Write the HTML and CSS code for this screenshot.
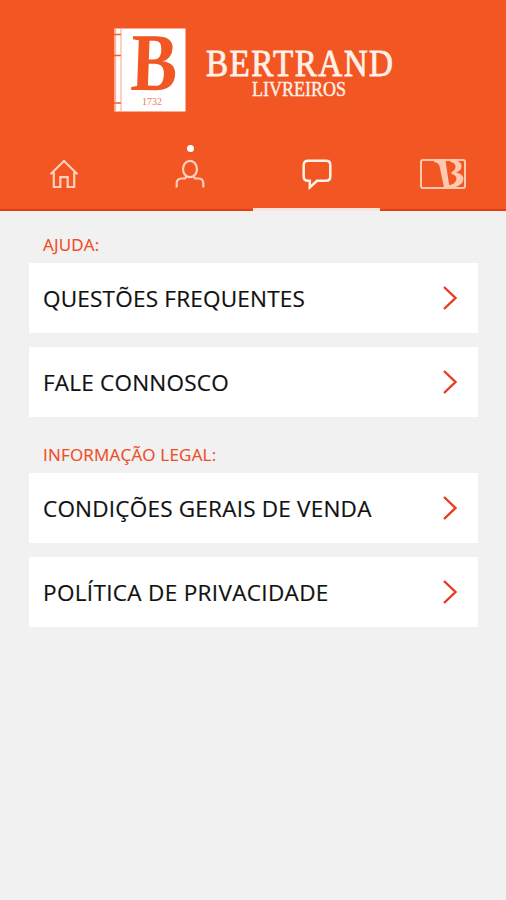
FILE: index.html
```html
<!DOCTYPE html>
<html lang="pt">
<head>
<meta charset="utf-8">
<title>Bertrand Livreiros</title>
<link rel="stylesheet" href="styles.css">
</head>
<body>
<header class="header">
  <div class="brand">
    <svg class="brand-mark" viewBox="0 0 72 84">
      <rect x="0.5" y="0.5" width="71" height="83" fill="#fff"/>
      <path d="M0 6.500H7M0 27.500H7M0 75H7" fill="none" stroke="#f15623" stroke-width="1.500"/>
      <path d="M7 1V83M1.700 1V83" fill="none" stroke="#f58a68" stroke-width=".8"/>
      <text class="mark-letter" transform="translate(16 62) skewX(-2) scale(.85 1)">B</text>
      <text class="mark-year" x="28" y="77" textLength="20" lengthAdjust="spacingAndGlyphs">1732</text>
    </svg>
    <svg class="brand-name" viewBox="0 0 190 56">
      <text class="name-main" transform="translate(1 31) scale(.85 1)" textLength="220">BERTRAND</text>
      <text class="name-sub" x="47" y="51" textLength="94" lengthAdjust="spacingAndGlyphs">LIVREIROS</text>
    </svg>
  </div>
  <nav class="tabs">
    <a class="tab">
      <svg class="icon" width="30" height="32" viewBox="0 0 30 32"><path d="M1.500 16.200L15 3L28.500 16.200M4.800 14V29H11.300V19.200H18.700V29H25.200V14"/></svg>
    </a>
    <a class="tab">
      <svg class="icon" width="30" height="32" viewBox="0 0 30 32"><ellipse cx="15" cy="11" rx="7" ry="8.200"/><path d="M1.700 29.500V25.500Q1.700 20.500 6.500 20.500H10L11.500 18M28.300 29.500V25.500Q28.300 20.500 23.500 20.500H20L18.500 18"/></svg>
      <span class="dot"></span>
    </a>
    <a class="tab active">
      <svg class="icon" width="30" height="32" viewBox="0 0 30 32"><path d="M6 2.800H24Q28.300 2.800 28.300 7V18.500Q28.300 22.800 24 22.800H15L7.800 29.500V22.800H6Q1.700 22.800 1.700 18.500V7Q1.700 2.800 6 2.800Z"/></svg>
    </a>
    <a class="tab">
      <svg class="card-icon" width="46" height="30" viewBox="0 0 46 30">
        <rect x="1" y="1" width="44" height="28" rx="2"/>
        <path d="M14 1.500H25.500L29.500 28.500H24L19.500 7Q18.500 3.500 14 3Z"/>
        <path d="M29 1.500H36Q41.500 3 41.500 7.500Q41 12 36 13.500Q43.500 15 43.500 20Q43 25.500 35 28.500H27L28 26.500Q36 25 36.500 20Q36.500 16 31.500 15V13Q35.500 11 35.500 7.500Q35.500 4 31 3Z"/>
      </svg>
    </a>
  </nav>
</header>
<main class="content">
  <section class="group">
    <h2 class="label"><span>AJUDA:</span></h2>
    <a class="row"><span>QUESTÕES FREQUENTES</span><svg class="chevron" viewBox="0 0 16 26"><path d="M2 2L13.500 13L2 24"/></svg></a>
    <a class="row"><span>FALE CONNOSCO</span><svg class="chevron" viewBox="0 0 16 26"><path d="M2 2L13.500 13L2 24"/></svg></a>
  </section>
  <section class="group">
    <h2 class="label"><span>INFORMAÇÃO LEGAL:</span></h2>
    <a class="row"><span>CONDIÇÕES GERAIS DE VENDA</span><svg class="chevron" viewBox="0 0 16 26"><path d="M2 2L13.500 13L2 24"/></svg></a>
    <a class="row"><span class="privacy">POLÍTICA DE PRIVACIDADE</span><svg class="chevron" viewBox="0 0 16 26"><path d="M2 2L13.500 13L2 24"/></svg></a>
  </section>
</main>
</body>
</html>
```
FILE: styles.css
```css
* { box-sizing: border-box; }
body {
  margin: 0;
  min-height: 900px;
  background: #f1f1f1;
  font-family: "Open Sans", sans-serif;
}
svg { overflow: visible; }
.header {
  height: 211px;
  background: #f15623;
  border-bottom: 2px solid #e23e13;
}
.brand {
  height: 138px;
  padding: 28px 0 0 114px;
  display: flex;
  gap: 19px;
}
.brand-mark { width: 72px; height: 84px; }
.brand-name { width: 190px; height: 56px; margin-top: 17px; }
.mark-letter {
  font: bold 82px "Liberation Serif", serif;
  fill: #f15623;
}
.mark-year { font: 11px "Liberation Serif", serif; fill: #f47c57; }
.name-main { font: 39px "Liberation Serif", serif; fill: #fff0e8; stroke: #fff0e8; stroke-width: .9; }
.name-sub { font: 20px "Liberation Serif", serif; fill: #fff0e8; stroke: #fff0e8; stroke-width: .4; }
.tabs { display: grid; grid-template-columns: repeat(4, 1fr); height: 73px; }
.tab {
  position: relative;
  display: flex;
  justify-content: center;
  align-items: flex-start;
  padding: 20px 0 0 1px;
}
.icon { fill: none; stroke: #ffd0bb; stroke-width: 2.2; }
.active { border-bottom: 3px solid #fbe3d9; }
.active .icon { stroke: #fff1e8; stroke-width: 2.5; }
.dot {
  position: absolute;
  top: 7px;
  left: 60px;
  width: 7px;
  height: 7px;
  border-radius: 50%;
  background: #fff;
}
.card-icon { fill: #ffc9b0; margin-top: 1px; }
.card-icon rect { fill: none; stroke: #ffc9b0; stroke-width: 2; }
.content { padding: 15px 28px 0 29px; }
.label {
  height: 37px;
  margin: 0;
  padding-left: 14px;
  font-size: 17px;
  line-height: 37px;
  font-weight: 400;
  letter-spacing: .2px;
  color: #ee4d25;
  -webkit-text-stroke: .15px #ee4d25;
}
.group + .group .label { margin-top: 19px; }
.row {
  display: flex;
  align-items: center;
  justify-content: space-between;
  height: 70px;
  padding: 0 20px 0 14px;
  background: #fff;
  color: #111;
  font-size: 22.5px;
  letter-spacing: .22px;
  -webkit-text-stroke: .2px #111;
  line-height: 30px;
  white-space: nowrap;
}
.row span { padding-top: 1px; }
.row + .row { margin-top: 14px; }
.privacy { letter-spacing: .34px; }
.chevron { width: 16px; height: 26px; fill: none; stroke: #e83a20; stroke-width: 2.4; }
```
